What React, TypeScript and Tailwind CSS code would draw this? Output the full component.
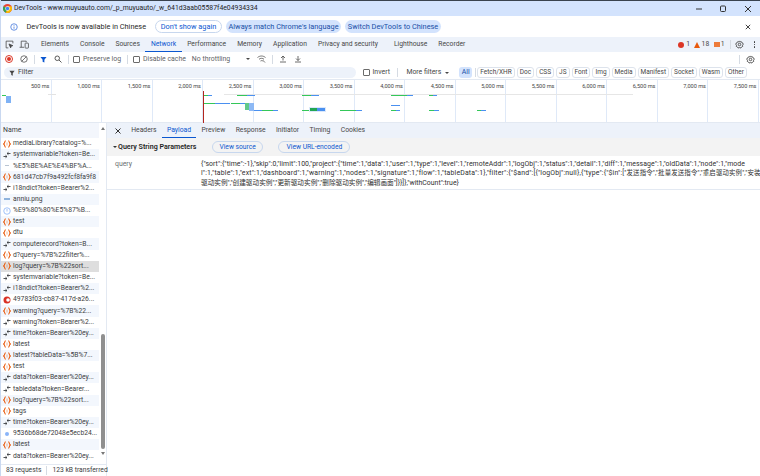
import React from "react";

const F = "[font-family:'Roboto','Noto_Sans_CJK_SC',sans-serif]";

function Chrome() {
  return (
    <svg width="9" height="9" viewBox="0 0 24 24" className="shrink-0">
      <circle cx="12" cy="12" r="12" fill="#ea4335" />
      <path d="M12 12 L1.6 6 A12 12 0 0 0 8 23.3 Z" fill="#34a853" />
      <path d="M12 12 L8 23.3 A12 12 0 0 0 22.4 6 L12 6 Z" fill="#fbbc05" />
      <circle cx="12" cy="12" r="6" fill="#fff" />
      <circle cx="12" cy="12" r="4.6" fill="#4285f4" />
    </svg>
  );
}

function Gear({ size = 11 }: { size?: number }) {
  return (
    <svg width={size} height={size} viewBox="0 0 24 24" fill="none" stroke="#474747" strokeWidth="2.4" className="shrink-0">
      <path d="M12 2.5 14 5l3-.4 1.3 2.7L21.5 9v3.2L20 14l.6 3-2.7 1.4L16 21h-3l-1-1-1 1H8l-1.900-2.600L3.400 17 4 14l-1.500-1.800V9l3.200-1.700L7 4.600l3 .4z" />
      <circle cx="12" cy="12" r="3.4" />
    </svg>
  );
}

function Check({ label }: { label: string }) {
  return (
    <span className="flex items-center gap-[3px] whitespace-nowrap">
      <span className="w-[7px] h-[7px] border border-[#6b6b6b] rounded-[1px] bg-white shrink-0" />
      <span>{label}</span>
    </span>
  );
}

function Sep() {
  return <span className="block w-px h-[9px] bg-[#d5dbe3] shrink-0" />;
}

type Kind = "fetch" | "xhr" | "dash" | "clock" | "red" | "img" | "line";

function RowIcon({ kind }: { kind: Kind }) {
  if (kind === "fetch")
    return (
      <svg width="8" height="8" viewBox="0 0 16 16" fill="none" stroke="#e8590c" strokeWidth="2.100" className="shrink-0">
        <path d="M5.500 1.500C2.500 1.500 4.500 7 1 8c3.500 1 1.500 6.500 4.500 6.500M10.500 1.500c3 0 1 5.500 4.500 6.500-3.500 1-1.500 6.500-4.500 6.500" />
        <path d="M8 5.500v1.500M8 9v1.500" strokeWidth="1.800" />
      </svg>
    );
  if (kind === "xhr")
    return (
      <svg width="8" height="8" viewBox="0 0 16 16" fill="none" stroke="#3d4043" strokeWidth="1.800" className="shrink-0">
        <path d="M15 5H8M11 2.500 8 5l3 2.500" />
        <path d="M1 11h7M5 8.500 8 11l-3 2.500" />
      </svg>
    );
  if (kind === "dash")
    return <span className="w-[8px] flex justify-center shrink-0"><span className="w-[4px] h-px bg-[#b9c4d2]" /></span>;
  if (kind === "line")
    return <span className="w-[8px] flex justify-center shrink-0"><span className="w-[6px] h-[2px] bg-[#8fb3dc]" /></span>;
  if (kind === "clock")
    return (
      <svg width="8" height="8" viewBox="0 0 16 16" fill="none" stroke="#8ab4f8" strokeWidth="1.600" className="shrink-0">
        <circle cx="8" cy="8" r="6.500" />
        <path d="M8 4v5" />
      </svg>
    );
  if (kind === "red")
    return (
      <svg width="8" height="8" viewBox="0 0 16 16" className="shrink-0">
        <circle cx="8" cy="8" r="7" fill="#d93025" />
        <circle cx="10" cy="8" r="3.600" fill="#fff" />
      </svg>
    );
  return (
    <span className="w-[8px] flex justify-center shrink-0"><span className="w-[4px] h-[4px] rounded-full bg-[#8ab4f8]" /></span>
  );
}

const rows: [Kind, string][] = [
  ["fetch", "mediaLibrary?catalog=%..."],
  ["xhr", "systemvariable?token=Be..."],
  ["dash", "%E5%BE%AE%E4%BF%A..."],
  ["fetch", "681d47cb7f9a492fcf8fa9f8"],
  ["xhr", "i18ndict?token=Bearer%2..."],
  ["line", "anniu.png"],
  ["clock", "%E9%80%80%E5%87%B..."],
  ["fetch", "test"],
  ["fetch", "dtu"],
  ["xhr", "computerecord?token=B..."],
  ["fetch", "d?query=%7B%22filter%..."],
  ["fetch", "log?query=%7B%22sort..."],
  ["xhr", "systemvariable?token=Be..."],
  ["xhr", "i18ndict?token=Bearer%2..."],
  ["red", "49783f03-cb87-417d-a26..."],
  ["fetch", "warning?query=%7B%22..."],
  ["xhr", "warning?token=Bearer%2..."],
  ["xhr", "time?token=Bearer%20ey..."],
  ["fetch", "latest"],
  ["fetch", "latest?tableData=%5B%7..."],
  ["fetch", "test"],
  ["xhr", "data?token=Bearer%20ey..."],
  ["xhr", "tabledata?token=Bearer..."],
  ["fetch", "log?query=%7B%22sort..."],
  ["fetch", "tags"],
  ["xhr", "time?token=Bearer%20ey..."],
  ["img", "9536b68de72048e5ecb24..."],
  ["fetch", "latest"],
  ["xhr", "data?token=Bearer%20ey..."],
];

const marks = ["500 ms", "1,000 ms", "1,500 ms", "2,000 ms", "2,500 ms", "3,000 ms", "3,500 ms", "4,000 ms", "4,500 ms", "5,000 ms", "5,500 ms", "6,000 ms", "6,500 ms", "7,000 ms", "7,500 ms"];
const topTabs = ["Elements", "Console", "Sources", "Network", "Performance", "Memory", "Application", "Privacy and security", "Lighthouse", "Recorder"];
const chips = ["Fetch/XHR", "Doc", "CSS", "JS", "Font", "Img", "Media", "Manifest", "Socket", "Wasm", "Other"];
const subTabs = ["Headers", "Payload", "Preview", "Response", "Initiator", "Timing", "Cookies"];

function Bar({ x1, x2, y, c, h = 1 }: { x1: number; x2: number; y: number; c: string; h?: number }) {
  return <rect x={x1} y={y} width={x2 - x1} height={h} fill={c} />;
}

const G = "#34c759";
const B = "#4a90f0";

function Timeline() {
  return (
    <svg width="760" height="43" viewBox="1 80 760 43" className="absolute left-0 top-0">
      <Bar x1={48} x2={56} y={94} c="#e3e3e3" />
      <Bar x1={224} x2={633} y={94} c="#e6e6e6" />
      <Bar x1={2} x2={6} y={95} c="#34c759" />
      <Bar x1={6} x2={11} y={96} c="#7fb2f5" h={7} />
      <Bar x1={203} x2={204} y={91} c="#b3261e" h={32} />
      <Bar x1={204} x2={208} y={95} c={G} />
      <Bar x1={208} x2={212} y={95} c={B} />
      <Bar x1={237} x2={247} y={95} c={G} />
      <Bar x1={247} x2={255} y={95} c={B} />
      <Bar x1={302} x2={311} y={95} c={G} />
      <Bar x1={311} x2={319} y={95} c={B} />
      <Bar x1={391} x2={407} y={95} c={G} />
      <Bar x1={407} x2={413} y={95} c={B} />
      <Bar x1={429} x2={433} y={95} c={G} />
      <Bar x1={433} x2={437} y={95} c={B} />
      <Bar x1={204} x2={215} y={103} c={G} />
      <Bar x1={215} x2={230} y={103} c={B} />
      <Bar x1={231} x2={240} y={103} c={G} />
      <Bar x1={240} x2={245} y={103} c={B} />
      <Bar x1={245} x2={249} y={103} c="#63c98a" h={7} />
      <Bar x1={249} x2={254} y={103} c="#8db9f5" h={8} />
      <Bar x1={254} x2={262} y={110} c={B} />
      <Bar x1={262} x2={273} y={110} c={G} />
      <Bar x1={273} x2={278} y={110} c={B} />
      <Bar x1={302} x2={310} y={110} c={G} />
      <Bar x1={309} x2={326} y={107} c="#dbe8fb" h={5} />
      <Bar x1={310} x2={317} y={108} c="#22a653" h={3} />
      <Bar x1={317} x2={325} y={108} c={B} h={3} />
      <Bar x1={340} x2={356} y={110} c={G} />
      <Bar x1={356} x2={362} y={110} c={B} />
      <Bar x1={391} x2={400} y={105} c={B} />
      <Bar x1={391} x2={396} y={110} c={G} />
      <Bar x1={396} x2={400} y={110} c={B} />
      <Bar x1={429} x2={434} y={110} c={G} />
      <Bar x1={434} x2={439} y={110} c={B} />
      <Bar x1={477} x2={481} y={110} c={G} />
      <Bar x1={481} x2={486} y={110} c={B} />
    </svg>
  );
}

export default function App() {
  return (
    <div className={`w-[760px] h-[476px] overflow-hidden flex flex-col bg-white text-[#3c4043] text-[6.9px] leading-none ${F} border-l border-[#c9d8f0]`}>
      {/* title bar */}
      <div className="h-[16px] shrink-0 bg-[#d3e3fd] border-t border-[#39424e] flex items-center pl-[2px] pr-[4px] text-[#1f1f1f]">
        <Chrome />
        <span className="ml-[2px] text-[6.850px] grow whitespace-nowrap">DevTools - www.muyuauto.com/_p_muyuauto/_w_641d3aab05587f4e04934334</span>
        <svg width="60" height="10" viewBox="0 0 60 10" fill="none" stroke="#333" strokeWidth="1">
          <path d="M0 5h6" />
          <rect x="24.500" y="2" width="5" height="5.500" rx="1" />
          <path d="M49 2l6 6M55 2l-6 6" />
        </svg>
      </div>
      {/* info bar */}
      <div className="h-[21px] shrink-0 bg-white flex items-center pl-[9px] pr-[9px] text-[7.350px] text-[#1f1f1f] whitespace-nowrap">
        <svg width="8" height="8" viewBox="0 0 16 16" fill="none" stroke="#3a6fd8" strokeWidth="1.500" className="shrink-0">
          <circle cx="8" cy="8" r="6.500" />
          <path d="M8 7v4.500M8 4.200v1.500" />
        </svg>
        <span className="ml-[8.500px]">DevTools is now available in Chinese</span>
        <span className="ml-[9px] w-[67px] h-[13px] justify-center flex items-center rounded-full border border-[#c7d7ee] text-[#0b57d0]">Don't show again</span>
        <span className="ml-[4px] w-[115px] h-[13px] justify-center flex items-center rounded-full bg-[#d3e3fd] text-[#174ea6]">Always match Chrome's language</span>
        <span className="ml-[4px] w-[96px] h-[13px] justify-center flex items-center rounded-full bg-[#d3e3fd] text-[#174ea6]">Switch DevTools to Chinese</span>
        <span className="grow" />
        <svg width="6" height="6" viewBox="0 0 6 6" stroke="#444" strokeWidth="1"><path d="M.8.8l4.400 4.400M5.200.8.8 5.200" /></svg>
      </div>
      {/* tabs row */}
      <div className="h-[15px] shrink-0 bg-[#edf2fa] flex items-stretch pl-[4px] pr-[5px] whitespace-nowrap text-[6.750px]">
        <svg width="9" height="9" viewBox="0 0 16 16" fill="none" stroke="#474747" strokeWidth="1.400" className="self-center shrink-0">
          <path d="M14 6V2H2v12h4" />
          <path d="M7 7l7 3-3 1-1 3z" fill="#474747" />
        </svg>
        <svg width="10" height="9" viewBox="0 0 18 16" fill="none" stroke="#474747" strokeWidth="1.400" className="ml-[5px] self-center shrink-0">
          <path d="M4 13V2h9v2M1 13h8" />
          <rect x="11" y="5.500" width="6" height="9" rx="1" />
        </svg>
        <div className="flex ml-[6.500px]">
          {topTabs.map((t) => (
            <span key={t} className={`flex items-center px-[5.500px] ${t === "Lighthouse" ? "ml-[5px] " : ""}${t === "Network" ? "text-[#0b57d0] border-b border-[#0b57d0]" : "text-[#474747]"}`}>{t}</span>
          ))}
        </div>
        <span className="grow" />
        <div className="flex items-center gap-[2px] text-[#474747]">
          <span className="w-[6px] h-[6px] rounded-full bg-[#dc3626] inline-block" /><span>1</span>
          <span className="ml-[1.500px] w-0 h-0 border-x-[3px] border-x-transparent border-b-[6px] border-b-[#e8590c]" /><span>18</span>
          <span className="ml-[2.500px] w-[6px] h-[5px] bg-[#ed7b3a] inline-block" /><span className="-ml-[1px]">1</span>
          <span className="ml-[3px]"><Sep /></span>
          <span className="ml-[2.500px]"><Gear size={9} /></span>
          <span className="ml-[7.500px] flex flex-col gap-[1.200px]">
            <i className="block w-[1.500px] h-[1.500px] rounded-full bg-[#333]" />
            <i className="block w-[1.500px] h-[1.500px] rounded-full bg-[#333]" />
            <i className="block w-[1.500px] h-[1.500px] rounded-full bg-[#333]" />
          </span>
        </div>
      </div>
      {/* toolbar */}
      <div className="h-[14px] shrink-0 bg-white flex items-center pl-[4px] pr-[5px] gap-[6px] text-[#5f6368] whitespace-nowrap">
        <span className="w-[8px] h-[8px] rounded-full border border-[#dc3626] flex items-center justify-center shrink-0"><span className="w-[4px] h-[4px] rounded-full bg-[#dc3626]" /></span>
        <svg width="8" height="8" viewBox="0 0 16 16" fill="none" stroke="#474747" strokeWidth="1.500" className="shrink-0 ml-[1px]">
          <circle cx="8" cy="8" r="6.500" />
          <path d="M3.500 12.500l9-9" />
        </svg>
        <Sep />
        <svg width="7" height="7" viewBox="0 0 16 16" fill="#0b57d0" className="shrink-0 -ml-[1px]"><path d="M1 2h14L10 8.500V15l-4-2V8.500z" /></svg>
        <svg width="8" height="8" viewBox="0 0 16 16" fill="none" stroke="#474747" strokeWidth="1.800" className="shrink-0 ml-[1px]">
          <circle cx="6.500" cy="6.500" r="4.500" />
          <path d="M10 10l5 5" />
        </svg>
        <Sep />
        <span className="-ml-[2px]"><Check label="Preserve log" /></span>
        <Sep />
        <span className="-ml-[1px]"><Check label="Disable cache" /></span>
        <span className="w-[48px]">No throttling</span>
        <span className="w-0 h-0 border-x-[2px] border-x-transparent border-t-[2.500px] border-t-[#474747]" />
        <svg width="9" height="8" viewBox="0 0 18 16" fill="none" stroke="#474747" strokeWidth="1.500" className="shrink-0 ml-[1px]">
          <path d="M1 5c5-4 11-4 16 0M4 8.500c3-2.500 7-2.500 10 0M7 12c1-1 3-1 4 0" />
          <path d="M11 10l5 5" />
        </svg>
        <Sep />
        <svg width="8" height="8" viewBox="0 0 16 16" fill="none" stroke="#474747" strokeWidth="1.600" className="shrink-0"><path d="M8 11V2M4 6l4-4 4 4M2 14h12" /></svg>
        <svg width="8" height="8" viewBox="0 0 16 16" fill="none" stroke="#474747" strokeWidth="1.600" className="shrink-0 ml-[1px]"><path d="M8 2v9M4 7l4 4 4-4M2 14h12" /></svg>
        <span className="grow" />
        <Sep />
        <Gear size={9} />
      </div>
      {/* filter row */}
      <div className="h-[14px] shrink-0 bg-white flex items-center pl-[3px] text-[#474747] border-b border-[#e3e9f2] whitespace-nowrap">
        <div className="w-[352px] h-[11px] rounded-full bg-[#edf2fa] flex items-center pl-[5px] gap-[3px] shrink-0">
          <svg width="6" height="6" viewBox="0 0 16 16" fill="#474747"><path d="M1 2h14L10 8.500V15l-4-2V8.500z" /></svg>
          <span>Filter</span>
        </div>
        <span className="ml-[6.500px]"><Check label="Invert" /></span>
        <span className="ml-[7px]"><Sep /></span>
        <span className="ml-[8.500px]">More filters</span>
        <span className="ml-[4px] w-0 h-0 border-x-[2px] border-x-transparent border-t-[2.500px] border-t-[#474747]" />
        <span className="ml-[10px] w-[13px] h-[10.500px] justify-center rounded-[3px] bg-[#d3e3fd] text-[#174ea6] flex items-center">All</span>
        <span className="ml-[3px] mr-[1px]"><Sep /></span>
        <div className="flex gap-[2px] text-[6.500px]">
          {chips.map((c) => (
            <span key={c} className="h-[10.500px] px-[2px] rounded-[3px] border border-[#dde3ec] flex items-center">{c}</span>
          ))}
        </div>
      </div>
      {/* overview */}
      <div className="relative h-[43px] shrink-0 border-b border-[#e3e9f2] flex text-[5.600px] text-[#474747]">
        {marks.map((m) => (
          <div key={m} className="w-[50.500px] shrink-0 h-full border-r border-[#dfe9f8] pr-[1px] pt-[3.500px] text-right">{m}</div>
        ))}
        <Timeline />
      </div>
      {/* main */}
      <div className="flex grow min-h-0">
        {/* left */}
        <div className="w-[106px] shrink-0 flex flex-col border-r border-[#e3e9f2] text-[6.750px]">
          <div className="flex grow min-h-0">
            <div className="w-[98px] shrink-0 flex flex-col">
              <div className="h-[15px] shrink-0 flex items-center pl-[2px] bg-[#f3f6fc] text-[6.900px]">Name</div>
              {rows.map(([k, n], i) => (
                <div key={i} className={`h-[11.170px] shrink-0 flex items-center pl-[2px] gap-[2px] whitespace-nowrap overflow-hidden ${i === 11 ? "bg-[#dedede]" : i % 2 === 1 ? "bg-[#f3f7fd]" : "bg-white"}`}>
                  <RowIcon kind={k} />
                  <span>{n}</span>
                </div>
              ))}
            </div>
            <div className="w-[7px] shrink-0 flex flex-col items-center bg-white pt-[4px]">
              <span className="w-0 h-0 border-x-[2.500px] border-x-transparent border-b-[3px] border-b-[#777]" />
              <span className="w-[4px] h-[115px] mt-[204px] rounded-full bg-[#8f8f8f]" />
              <span className="mt-[3px] w-0 h-0 border-x-[2.500px] border-x-transparent border-t-[3px] border-t-[#777]" />
            </div>
          </div>
          <div className="h-[12px] shrink-0 flex items-center pl-[5px] gap-[5px] whitespace-nowrap border-t border-[#e3e9f2]">
            <span>83 requests</span>
            <Sep />
            <span>123 kB transferred</span>
          </div>
        </div>
        {/* right */}
        <div className="grow min-w-0 flex flex-col whitespace-nowrap">
          <div className="h-[15px] shrink-0 bg-[#edf2fa] flex items-stretch pl-[8px] text-[6.800px]">
            <svg width="6" height="6" viewBox="0 0 6 6" stroke="#333" strokeWidth="1" className="self-center shrink-0"><path d="M.5.5l5 5M5.500.5l-5 5" /></svg>
            <div className="flex ml-[5px]">
              {subTabs.map((t) => (
                <span key={t} className={`flex items-center px-[5.200px] ${t === "Payload" ? "text-[#0b57d0] border-b border-[#0b57d0]" : "text-[#474747]"}`}>{t}</span>
              ))}
            </div>
          </div>
          <div className="h-[18px] shrink-0 bg-[#f3f3f3] flex items-center pl-[6px] text-[#1f1f1f] text-[7.100px]">
            <span className="w-0 h-0 border-x-[2px] border-x-transparent border-t-[2.500px] border-t-[#333]" />
            <span className="ml-[1px] font-semibold">Query String Parameters</span>
            <span className="ml-[16px] w-[50.500px] h-[12px] justify-center rounded-full border border-[#c7d7ee] text-[#0b57d0] flex items-center text-[6.700px]">View source</span>
            <span className="ml-[15.500px] w-[72px] h-[12px] justify-center rounded-full border border-[#c7d7ee] text-[#0b57d0] flex items-center text-[6.700px]">View URL-encoded</span>
          </div>
          <div className="flex h-[34px] shrink-0 border-b border-[#e3e9f2] pt-[3.500px] pl-[8px] text-[6.900px] overflow-hidden">
            <span className="w-[86px] shrink-0 text-[#6b6f73] pt-[1px]">query</span>
            <div className="flex flex-col leading-[9.500px] text-[#303030]">
              <span className="tracking-[0.07px]">{`{"sort":{"time":-1},"skip":0,"limit":100,"project":{"time":1,"data":1,"user":1,"type":1,"level":1,"remoteAddr":1,"logObj":1,"status":1,"detail":1,"diff":1,"message":1,"oldData":1,"node":1,"mode`}</span>
              <span className="tracking-[0.17px]">{`l":1,"table":1,"ext":1,"dashboard":1,"warning":1,"nodes":1,"signature":1,"flow":1,"tableData":1},"filter":{"$and":[{"logObj":null},{"type":{"$in":[`}<span className="text-[6.400px]">{`"发送指令","批量发送指令","重启驱动实例","安装`}</span></span>
              <span><span className="text-[6.650px]">{`驱动实例","创建驱动实例","更新驱动实例","删除驱动实例","编辑画面"`}</span>{`]}}]},"withCount":true}`}</span>
            </div>
          </div>
        </div>
      </div>
    </div>
  );
}
